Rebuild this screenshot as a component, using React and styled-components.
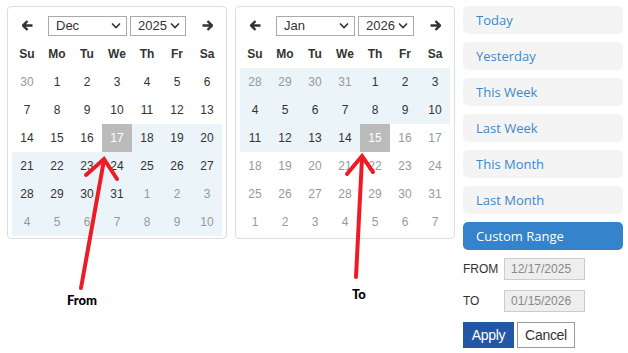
import React from "react";
import styled, { createGlobalStyle } from "styled-components";

const GlobalStyle = createGlobalStyle`
  body {
    margin: 0;
    background: #fff;
    font-family: "Liberation Sans", Arial, sans-serif;
  }
`;

const Page = styled.div`
  position: relative;
  width: 628px;
  height: 353px;
  display: flex;
  align-items: flex-start;
  padding: 6px 0 0 7px;
  box-sizing: border-box;
  gap: 8px;
`;

const Calendar = styled.div`
  width: 220px;
  box-sizing: border-box;
  border: 1px solid #ddd;
  border-radius: 4px;
  padding: 4px 4px 2px;
`;

const NavRow = styled.div`
  height: 29px;
  display: flex;
  align-items: center;
`;

const NavArrow = styled.div`
  width: 30px;
  display: flex;
  justify-content: center;
  align-items: center;
`;

const Selects = styled.div`
  flex: 1;
  display: flex;
  gap: 3px;
  padding-left: 6px;
`;

const Select = styled.div`
  width: ${(p) => p.$w}px;
  height: 20px;
  box-sizing: border-box;
  border: 1px solid #a9a9a9;
  display: flex;
  align-items: center;
  justify-content: space-between;
  padding: 0 5px 0 7px;
  font-size: 13px;
  color: #333;
`;

const Grid = styled.div`
  display: grid;
  grid-template-columns: repeat(7, 30px);
  grid-auto-rows: 28px;
`;

const Head = styled.div`
  display: flex;
  align-items: center;
  justify-content: center;
  font-size: 12px;
  font-weight: bold;
  color: #333;
`;

const Day = styled.div`
  display: flex;
  align-items: center;
  justify-content: center;
  font-size: 12px;
  color: ${(p) => (p.$sel ? "#fff" : p.$off ? "#999" : "#333")};
  background: ${(p) => (p.$sel ? "#bbb" : p.$range ? "#ebf4f8" : "transparent")};
`;

const Ranges = styled.div`
  width: 160px;
  display: flex;
  flex-direction: column;
  gap: 8px;
`;

const RangeBtn = styled.div`
  height: 28px;
  border-radius: 5px;
  display: flex;
  align-items: center;
  padding-left: 13px;
  font-family: "Open Sans", sans-serif;
  font-size: 13px;
  color: ${(p) => (p.$active ? "#fff" : "#3a89cf")};
  background: ${(p) => (p.$active ? "#3584cb" : "#f4f4f4")};
`;

const InputRow = styled.div`
  display: flex;
  align-items: center;
  height: 22px;
  margin-top: ${(p) => p.$mt || 0}px;
`;

const Label = styled.div`
  width: 41px;
  font-size: 12px;
  color: #333;
`;

const DateInput = styled.div`
  width: 81px;
  height: 22px;
  box-sizing: border-box;
  border: 1px solid #ccc;
  background: #eee;
  color: #888;
  font-size: 12px;
  display: flex;
  align-items: center;
  padding-left: 6px;
`;

const Buttons = styled.div`
  display: flex;
  gap: 3px;
  margin-top: 2px;
`;

const Button = styled.div`
  width: ${(p) => p.$w}px;
  height: 26px;
  box-sizing: border-box;
  display: flex;
  align-items: center;
  justify-content: center;
  font-size: 14px;
  letter-spacing: -0.3px;
  color: ${(p) => (p.$primary ? "#fff" : "#333")};
  background: ${(p) => (p.$primary ? "#2357a6" : "#fff")};
  border: 1px solid ${(p) => (p.$primary ? "#2357a6" : "#999")};
`;

const Overlay = styled.svg`
  position: absolute;
  left: 0;
  top: 0;
  pointer-events: none;
`;

const Note = styled.div`
  position: absolute;
  left: ${(p) => p.$x}px;
  top: ${(p) => p.$y}px;
  font-family: Lato, sans-serif;
  font-weight: 900;
  font-size: 13px;
  color: #000;
`;

const Arrow = ({ dir }) => (
  <svg width="11" height="11" viewBox="0 0 11 11">
    <g transform={dir === "right" ? "translate(11 0) scale(-1 1)" : undefined}>
      <path d="M5.5 1 L1 5.5 L5.5 10 M1.5 5.5 H10.5" stroke="#333" strokeWidth="2.4" fill="none" />
    </g>
  </svg>
);

const Chevron = () => (
  <svg width="10" height="7" viewBox="0 0 10 7">
    <path d="M1 1.5 L5 5.5 L9 1.5" stroke="#333" strokeWidth="1.6" fill="none" />
  </svg>
);

const heads = ["Su", "Mo", "Tu", "We", "Th", "Fr", "Sa"];

// 42 cells: trailing days of the previous month, the month, then the next month
const buildDays = (last, startPrev, offset, maxDay) => {
  const days = [];
  for (let i = 0; i < offset; i++) days.push({ n: startPrev + i, off: true });
  for (let d = 1; d <= last; d++) days.push({ n: d, off: maxDay ? d > maxDay : false });
  let n = 1;
  while (days.length < 42) days.push({ n: n++, off: true });
  return days;
};

const decDays = buildDays(31, 30, 1);
const janDays = buildDays(31, 28, 4, 15);

const Month = ({ month, year, days, selIndex, inRange }) => (
  <Calendar>
    <NavRow>
      <NavArrow><Arrow dir="left" /></NavArrow>
      <Selects>
        <Select $w={79}>{month}<Chevron /></Select>
        <Select $w={56}>{year}<Chevron /></Select>
      </Selects>
      <NavArrow><Arrow dir="right" /></NavArrow>
    </NavRow>
    <Grid>
      {heads.map((h) => (
        <Head key={h}>{h}</Head>
      ))}
      {days.map((d, i) => (
        <Day key={i} $off={d.off} $sel={i === selIndex} $range={inRange(i)}>
          {d.n}
        </Day>
      ))}
    </Grid>
  </Calendar>
);

const ranges = ["Today", "Yesterday", "This Week", "Last Week", "This Month", "Last Month"];

export default function App() {
  return (
    <>
      <GlobalStyle />
      <Page>
        <Month month="Dec" year="2025" days={decDays} selIndex={17} inRange={(i) => i > 17} />
        <Month month="Jan" year="2026" days={janDays} selIndex={18} inRange={(i) => i < 18} />
        <Ranges>
          {ranges.map((r) => (
            <RangeBtn key={r}>{r}</RangeBtn>
          ))}
          <RangeBtn $active>Custom Range</RangeBtn>
          <InputRow>
            <Label>FROM</Label>
            <DateInput>12/17/2025</DateInput>
          </InputRow>
          <InputRow $mt={2}>
            <Label>TO</Label>
            <DateInput>01/15/2026</DateInput>
          </InputRow>
          <Buttons>
            <Button $primary $w={51}>Apply</Button>
            <Button $w={58}>Cancel</Button>
          </Buttons>
        </Ranges>
        <Overlay width="628" height="353">
          <g stroke="#ed1c24" strokeWidth="4" strokeLinecap="round" fill="none">
            <path d="M104 160 L81 288" />
            <path d="M86 175 L104 159 L117 179" />
            <path d="M362 158 L356 277" />
            <path d="M347 174 L362 156 L373 172" />
          </g>
        </Overlay>
        <Note $x={67} $y={292}>From</Note>
        <Note $x={352} $y={286}>To</Note>
      </Page>
    </>
  );
}
